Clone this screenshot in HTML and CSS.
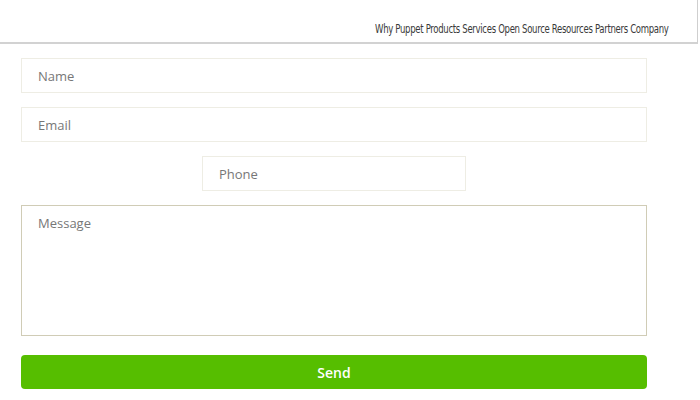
FILE: index.html
```html
<!DOCTYPE html>
<html>
<head>
<meta charset="utf-8">
<link rel="stylesheet" href="styles.css">
</head>
<body>
<header class="topbar">
  <nav class="nav">
    <a>Why Puppet</a> <a>Products</a> <a>Services</a> <a>Open Source</a> <a>Resources</a> <a>Partners</a> <a>Company</a>
  </nav>
</header>
<form class="form">
  <input class="field" type="text" placeholder="Name">
  <input class="field" type="text" placeholder="Email">
  <input class="field phone" type="text" placeholder="Phone">
  <textarea class="field message" placeholder="Message"></textarea>
  <button class="send" type="button">Send</button>
</form>
</body>
</html>
```
FILE: styles.css
```css
html, body { margin: 0; padding: 0; background: #fff; }
body { width: 700px; height: 400px; overflow: hidden; font-family: "Open Sans", sans-serif; }
.topbar {
  width: 697px;
  height: 42px;
  border-bottom: 2px solid #d2d2d2;
  border-right: 1px solid #cfcfcf;
  display: flex;
  justify-content: flex-end;
  align-items: flex-end;
  box-sizing: content-box;
}
.nav {
  font-family: "DejaVu Sans Condensed", sans-serif;
  font-size: 12px;
  letter-spacing: -0.4px;
  color: #3a3a3a;
  margin: 0 28px 6px 0;
  white-space: nowrap;
  transform: scaleX(0.79);
  transform-origin: right bottom;
}
.nav a { color: #3a3a3a; }
.form {
  display: flex;
  flex-direction: column;
  align-items: center;
  width: 626px;
  margin: 14px 0 0 21px;
  gap: 14px;
}
.field {
  box-sizing: border-box;
  width: 626px;
  height: 35px;
  border: 1px solid #eeede4;
  padding: 0 16px;
  font-family: "Open Sans", sans-serif;
  font-size: 13px;
  color: #777;
  outline: none;
  background: #fff;
  margin: 0;
}
.field::placeholder { color: #777; }
.phone { width: 264px; }
.message {
  height: 131px;
  border-color: #d0ccb6;
  padding: 8px 16px;
  resize: none;
}
.send {
  width: 626px;
  height: 34px;
  margin-top: 5px;
  border: none;
  border-radius: 4px;
  background: #56be00;
  color: #fff;
  font-family: "Open Sans", sans-serif;
  font-weight: 600;
  font-size: 14px;
}
```
